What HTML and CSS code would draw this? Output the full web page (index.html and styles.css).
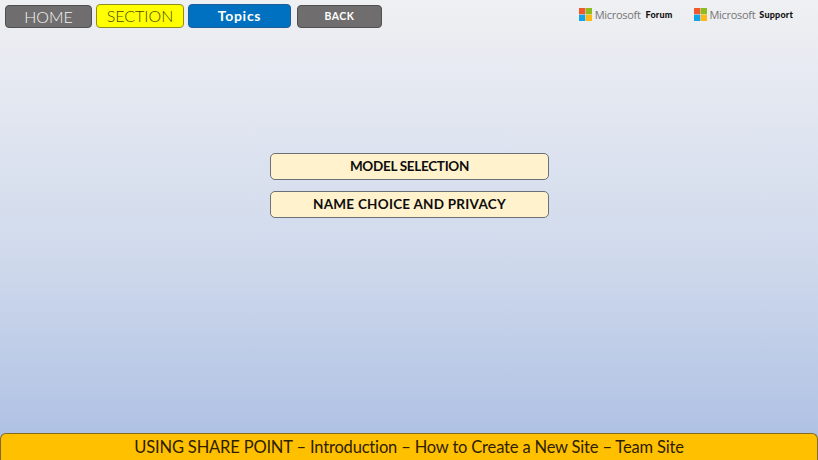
FILE: index.html
```html
<!DOCTYPE html>
<html lang="en">
<head>
<meta charset="utf-8">
<title>Using Share Point</title>
<link rel="stylesheet" href="styles.css">
</head>
<body>
<header class="topbar">
  <nav class="nav">
    <a class="btn btn-home">HOME</a>
    <a class="btn btn-section">SECTION</a>
    <a class="btn btn-topics">Topics</a>
    <a class="btn btn-back">BACK</a>
  </nav>
  <div class="links">
    <a class="ms ms-forum">
      <svg class="ms-logo" viewBox="0 0 13 13" aria-hidden="true"><rect width="6.3" height="6.3" fill="#f1582b"/><rect x="6.7" width="6.3" height="6.3" fill="#8cbc1e"/><rect y="6.7" width="6.3" height="6.3" fill="#14a4e8"/><rect x="6.7" y="6.7" width="6.3" height="6.3" fill="#fdb813"/></svg>
      <span class="ms-name">Microsoft</span>
      <span class="ms-label">Forum</span>
    </a>
    <a class="ms ms-support">
      <svg class="ms-logo" viewBox="0 0 13 13" aria-hidden="true"><rect width="6.3" height="6.3" fill="#f1582b"/><rect x="6.7" width="6.3" height="6.3" fill="#8cbc1e"/><rect y="6.7" width="6.3" height="6.3" fill="#14a4e8"/><rect x="6.7" y="6.7" width="6.3" height="6.3" fill="#fdb813"/></svg>
      <span class="ms-name">Microsoft</span>
      <span class="ms-label">Support</span>
    </a>
  </div>
</header>
<main class="menu">
  <a class="item item-model">MODEL SELECTION</a>
  <a class="item item-name">NAME CHOICE AND PRIVACY</a>
</main>
<footer class="footer">USING SHARE POINT – Introduction – How to Create a New Site – Team Site</footer>
</body>
</html>
```
FILE: styles.css
```css
* { box-sizing: border-box; }
html, body { margin: 0; height: 100%; }
body {
  width: 818px;
  height: 460px;
  overflow: hidden;
  display: flex;
  flex-direction: column;
  font-family: "Lato", "Open Sans", sans-serif;
  background: linear-gradient(180deg, #eff0f2 0%, #e4e8f1 20%, #d0daec 55%, #b0c2e4 94%);
}
.topbar {
  display: flex;
  justify-content: space-between;
  align-items: flex-start;
  padding: 4px 25px 0 5px;
  height: 153px;
}
.nav { display: flex; align-items: flex-end; }
.btn {
  display: flex;
  align-items: center;
  justify-content: center;
  height: 23px;
  padding-bottom: 1px;
  border-radius: 4px;
  border: 1px solid #4f4f4f;
  background: #6f6d6d;
  color: #fff;
}
.btn-home { width: 87px; font-size: 16px; font-weight: 300; color: #f5f5f5; }
.btn-section {
  width: 88px; height: 24px; margin-left: 4px;
  background: #ffff00; border-color: #8d8d22; color: #4a4a00;
  font-size: 16px; font-weight: 300;
}
.btn-topics {
  width: 103px; height: 24px; margin-left: 4px;
  background: #0070c0; border-color: #1a5f9c;
  font-size: 14px; font-weight: 700; letter-spacing: .7px;
}
.btn-back { width: 85px; margin-left: 6px; font-size: 10.5px; font-weight: 700; letter-spacing: .5px; }
.links { display: flex; gap: 21px; padding-top: 4px; }
.ms { display: flex; align-items: center; height: 13px; }
.ms-logo { width: 13px; height: 13px; flex: none; }
.ms-name { margin-left: 3px; font-family: "Open Sans", sans-serif; font-size: 11px; color: #757575; letter-spacing: -.3px; }
.ms-label { margin-left: 5px; font-size: 9px; font-weight: 900; color: #111; letter-spacing: .2px; }
.ms-support .ms-label { margin-left: 4px; }
.menu {
  flex: 1;
  display: flex;
  flex-direction: column;
  align-items: center;
  gap: 11px;
  padding-left: 1px;
}
.item {
  width: 279px;
  height: 27px;
  padding-bottom: 1px;
  display: flex;
  align-items: center;
  justify-content: center;
  background: #fff2cc;
  border: 1px solid #6b7079;
  border-radius: 5px;
  color: #0d0d0d;
  font-size: 13.5px;
  font-weight: 700;
}
.item-model { letter-spacing: -.3px; }
.item-name { letter-spacing: .25px; }
.footer {
  height: 27px;
  padding-bottom: 1px;
  display: flex;
  align-items: center;
  justify-content: center;
  background: #ffc000;
  border: 1px solid #7f6a20;
  border-bottom: 0;
  border-radius: 6px 6px 0 0;
  color: #2e2000;
  font-size: 16.5px;
  letter-spacing: -.17px;
}
```
